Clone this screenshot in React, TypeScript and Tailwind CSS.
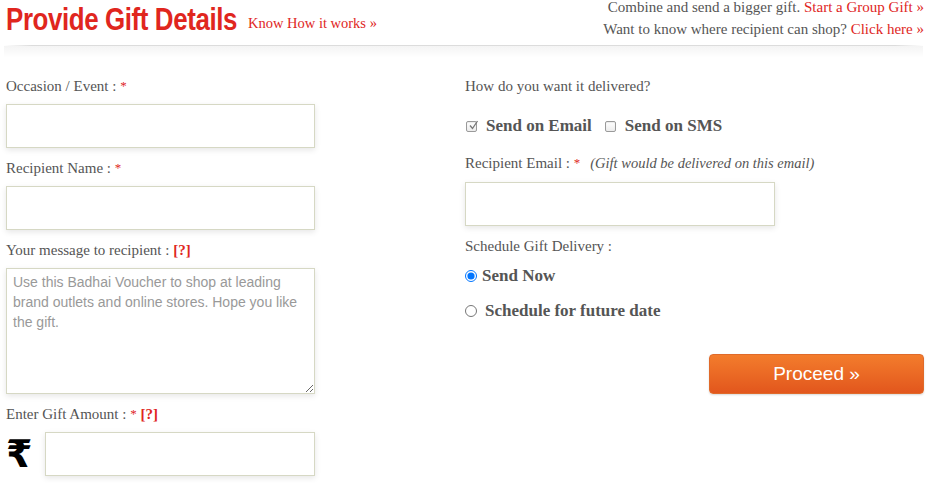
import React from "react";

const serif = "font-['Georgia','Liberation_Serif',serif]";
const inputCls =
  "block bg-white border border-[#d6d8c4] shadow-[0_2px_6px_rgba(0,0,0,0.10)] outline-none";

function Label({ children }: { children: React.ReactNode }) {
  return <div className={`${serif} text-[15px] leading-[18px] h-[18px] whitespace-nowrap text-[#555]`}>{children}</div>;
}

function Star() {
  return <span className="text-[#e0261e] text-[13px] align-top">*</span>;
}

function Q() {
  return <span className="text-[#e0261e] font-bold">[?]</span>;
}

function Box({ checked }: { checked?: boolean }) {
  return (
    <span className="relative inline-block w-[11px] h-[11px] border border-[#9a9a9a] rounded-[2px] bg-gradient-to-b from-white to-[#ececec] shadow-[inset_0_1px_1px_rgba(0,0,0,0.08)]">
      {checked && (
        <svg viewBox="0 0 11 11" className="absolute left-[1px] -top-[2px] w-[11px] h-[11px]">
          <path d="M2 5.5 L4.5 8.5 L9.5 1" fill="none" stroke="#777" strokeWidth="1.3" />
        </svg>
      )}
    </span>
  );
}

export default function App() {
  return (
    <div className="w-[927px] h-[483px] bg-white overflow-hidden relative">
      {/* header */}
      <div className="flex justify-between items-start pl-[6px] pr-[3px] h-[45px]">
        <div className="flex items-end pt-[1px]">
          <div className="w-[242px] h-[36px] whitespace-nowrap">
            <span className="inline-block origin-left scale-x-[0.81] font-['Liberation_Sans',sans-serif] font-bold text-[32px] leading-[36px] text-[#e0261e] tracking-[-0.5px]">
              Provide Gift Details
            </span>
          </div>
          <a className={`${serif} text-[14.5px] leading-[18px] text-[#e0261e] mb-[5px]`}>Know How it works »</a>
        </div>
        <div className={`${serif} text-[15px] leading-[22px] text-[#555] text-right -mt-[4px]`}>
          <div>
            Combine and send a bigger gift. <span className="text-[#e0261e]">Start a Group Gift »</span>
          </div>
          <div>
            Want to know where recipient can shop? <span className="text-[#e0261e]">Click here »</span>
          </div>
        </div>
      </div>
      <div className="mx-[4px] h-[1px] bg-[linear-gradient(to_right,rgba(0,0,0,0),#dcdcdc_3%,#dcdcdc_97%,rgba(0,0,0,0))]" />
      <div className="mx-[4px] h-[12px] bg-[linear-gradient(to_bottom,rgba(0,0,0,0.045),rgba(0,0,0,0))]" />

      {/* body */}
      <div className="flex pl-[6px] pt-[19px]">
        {/* left column */}
        <div className="w-[459px] flex flex-col">
          <Label>
            Occasion / Event : <Star />
          </Label>
          <input className={`${inputCls} mt-[9px] w-[309px] h-[44px]`} />
          <div className="mt-[11px]">
            <Label>
              Recipient Name : <Star />
            </Label>
          </div>
          <input className={`${inputCls} mt-[9px] w-[309px] h-[44px]`} />
          <div className="mt-[11px]">
            <Label>
              Your message to recipient : <Q />
            </Label>
          </div>
          <textarea
            className={`${inputCls} mt-[9px] w-[309px] h-[126px] resize-y px-[6px] py-[3px] font-['Liberation_Sans',sans-serif] text-[14px] leading-[20px] placeholder:text-[#999] text-[#999]`}
            placeholder="Use this Badhai Voucher to shop at leading brand outlets and online stores. Hope you like the gift."
          />
          <div className="mt-[11px]">
            <Label>
              Enter Gift Amount : <Star /> <Q />
            </Label>
          </div>
          <div className="flex items-center mt-[9px]">
            <span className="w-[39px] font-['DejaVu_Sans',sans-serif] font-bold text-[38px] leading-[44px] text-black">₹</span>
            <input className={`${inputCls} w-[270px] h-[44px]`} />
          </div>
        </div>

        {/* right column */}
        <div className="flex-1 flex flex-col">
          <Label>How do you want it delivered?</Label>
          <div className={`${serif} flex items-center h-[20px] mt-[21px] text-[17px] font-bold text-[#555] leading-[20px]`}>
            <span className="ml-[1px] mr-[9px] flex"><Box checked /></span>
            <span>Send on Email</span>
            <span className="ml-[13px] mr-[9px] flex"><Box /></span>
            <span>Send on SMS</span>
          </div>
          <div className="mt-[18px]">
            <Label>
              Recipient Email : <Star />
              <span className="ml-[10px] italic text-[14.5px]">(Gift would be delivered on this email)</span>
            </Label>
          </div>
          <input className={`${inputCls} mt-[10px] w-[310px] h-[44px]`} />
          <div className="mt-[11px]">
            <Label>Schedule Gift Delivery :</Label>
          </div>
          <div className={`${serif} flex items-center h-[20px] mt-[11px] text-[17px] font-bold text-[#555] leading-[20px]`}>
            <input type="radio" name="s" defaultChecked className="w-[12px] h-[12px] m-0 mr-[5px]" />
            <span>Send Now</span>
          </div>
          <div className={`${serif} flex items-center h-[20px] mt-[15px] text-[17px] font-bold text-[#555] leading-[20px]`}>
            <input type="radio" name="s" className="w-[12px] h-[12px] m-0 mr-[8px]" />
            <span>Schedule for future date</span>
          </div>
          <div className="flex justify-end mt-[33px] pr-[3px]">
            <button className="w-[215px] h-[40px] rounded-[4px] border border-[#e06a2a] bg-gradient-to-b from-[#f37c2c] to-[#e2561d] text-white font-['Liberation_Sans',sans-serif] text-[19px] leading-[38px] shadow-[0_1px_2px_rgba(0,0,0,0.15)]">
              Proceed »
            </button>
          </div>
        </div>
      </div>
    </div>
  );
}
